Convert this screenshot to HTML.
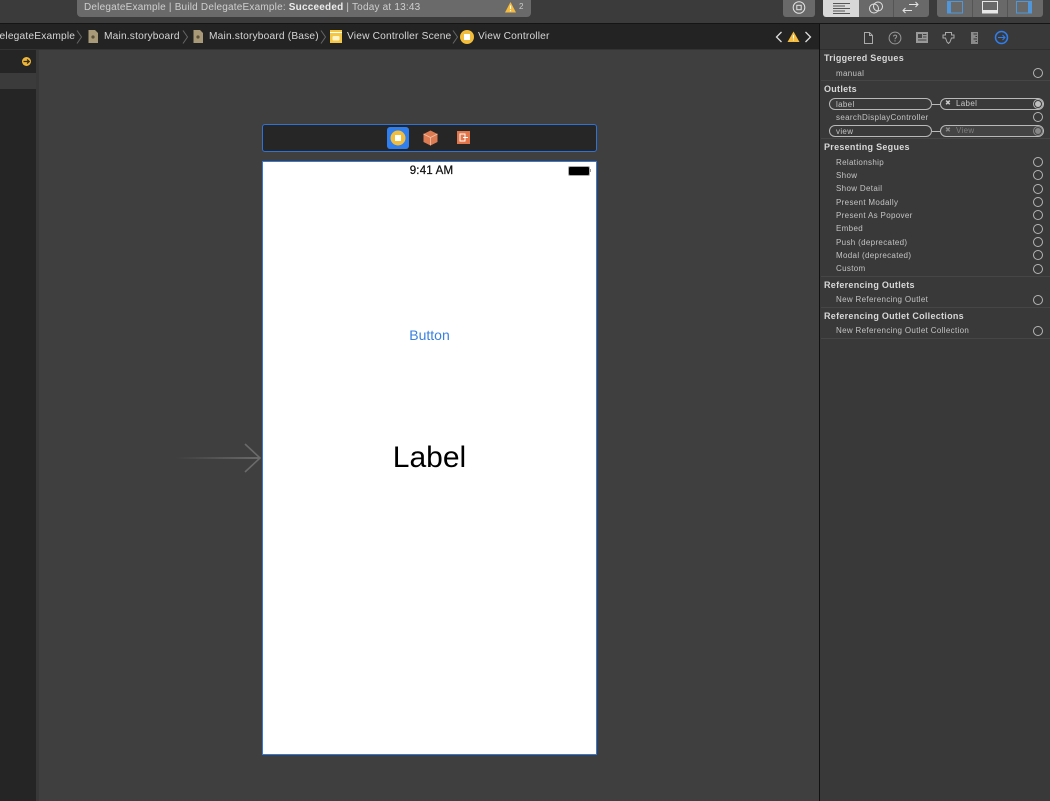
<!DOCTYPE html>
<html><head><meta charset="utf-8"><style>
html,body{margin:0;padding:0}
body{width:1050px;height:801px;overflow:hidden;background:#3f3f3f;position:relative;font-family:"Liberation Sans",sans-serif;color:#ddd}
#w{position:absolute;left:0;top:0;width:1050px;height:801px;overflow:hidden;filter:blur(.3px)}
.a{position:absolute}
.t{position:absolute;white-space:nowrap;line-height:12px}
.h{position:absolute;white-space:nowrap;line-height:12px;font-size:9px;font-weight:bold;color:#d8d8d8;left:824px;letter-spacing:.28px}
.r{position:absolute;white-space:nowrap;line-height:12px;font-size:8px;color:#c4c4c4;left:836px;letter-spacing:.33px;margin-top:.5px}
.c{position:absolute;left:1033px;width:8px;height:8px;border:1px solid #b5b5b5;border-radius:50%}
.l{position:absolute;left:821px;width:229px;height:1px;background:#464646}
.p{position:absolute;height:10px;border:1px solid #b9b9b9;border-radius:6px;background:#3a3a3a}
.bc{font-size:10.2px;letter-spacing:.18px;color:#d6d6d6;position:absolute;top:31px;line-height:12px;white-space:nowrap}
</style></head><body><div id="w">
<div class="a" style="left:0;top:0;width:1050px;height:23px;background:#3b3b3b"></div>
<div class="a" style="left:0;top:23px;width:1050px;height:1px;background:#151515"></div>
<div class="a" style="left:77px;top:0;width:454px;height:17px;background:#6a6a6a;border-radius:0 0 4px 4px"></div>
<div class="t" style="left:84px;top:2px;font-size:10px;color:#cfcfcf;letter-spacing:.2px">DelegateExample | Build DelegateExample: <b style="color:#ececec">Succeeded</b> | Today at 13:43</div>
<svg class="a" style="left:504px;top:1px" width="13" height="12"><path d="M6.5 1L12 11.5H1z" fill="#f4bb3f"/><path d="M6.5 4.5V8M6.5 9v1.2" stroke="#fff" stroke-width="1.1"/></svg>
<div class="t" style="left:519px;top:1px;font-size:8px;color:#ccc">2</div>

<div class="a" style="left:783px;top:0;width:32px;height:17px;background:#696969;border-radius:0 0 3px 3px"></div>
<svg class="a" style="left:792px;top:0" width="14" height="15" fill="none" stroke="#e4e4e4"><circle cx="7" cy="7.5" r="5.8"/><rect x="4.8" y="5.3" width="4.4" height="4.4"/></svg>
<div class="a" style="left:823px;top:0;width:36px;height:17px;background:#d8d8d8;border-radius:0 0 0 3px"></div>
<div class="a" style="left:859px;top:0;width:70px;height:17px;background:#696969;border-radius:0 0 3px 0"></div>
<div class="a" style="left:893px;top:0;width:1px;height:17px;background:#555"></div>
<svg class="a" style="left:833px;top:2px" width="18" height="13" stroke="#555" stroke-width="1"><path d="M0 1.5H17M0 4H12M0 6.5H17M0 9H12M0 11.5H17"/></svg>
<svg class="a" style="left:868px;top:0" width="16" height="15" fill="none" stroke="#e4e4e4"><circle cx="6" cy="8.5" r="4.5"/><circle cx="10" cy="6.5" r="4.5"/></svg>
<svg class="a" style="left:902px;top:1px" width="17" height="13" fill="none" stroke="#e4e4e4"><path d="M7 3.5H16M13.5 1L16 3.5L13.5 6M10 9.5H1M3.5 7L1 9.5L3.5 12"/></svg>
<div class="a" style="left:937px;top:0;width:106px;height:17px;background:#696969;border-radius:0 0 3px 3px"></div>
<div class="a" style="left:972px;top:0;width:1px;height:17px;background:#555"></div>
<div class="a" style="left:1007px;top:0;width:1px;height:17px;background:#555"></div>
<svg class="a" style="left:947px;top:1px" width="17" height="13" fill="none"><rect x=".5" y=".5" width="15" height="11.5" stroke="#4f96da"/><rect x="1" y="1" width="3" height="11" fill="#4f96da"/></svg>
<svg class="a" style="left:982px;top:1px" width="17" height="13" fill="none"><rect x=".5" y=".5" width="15" height="11.5" stroke="#e8e8e8"/><rect x="1" y="9" width="15" height="3" fill="#e8e8e8"/></svg>
<svg class="a" style="left:1016px;top:1px" width="17" height="13" fill="none"><rect x=".5" y=".5" width="15" height="11.5" stroke="#4f96da"/><rect x="12" y="1" width="3" height="11" fill="#4f96da"/></svg>

<div class="a" style="left:0;top:24px;width:820px;height:25px;background:#232323"></div>
<div class="a" style="left:0;top:49px;width:820px;height:1px;background:#333"></div>
<div class="bc" style="left:-8px">DelegateExample</div>
<svg class="a" style="left:76px;top:29px" width="7" height="16" fill="none" stroke="#666"><path d="M1 1.5L5.5 8L1 14.5"/></svg>
<svg class="a" style="left:88px;top:30px" width="11" height="13"><path d="M.5 0H7L10 3V13H.5z" fill="#a89a78"/><circle cx="5" cy="7" r="1.6" fill="#5d5237"/></svg>
<div class="bc" style="left:104px">Main.storyboard</div>
<svg class="a" style="left:182px;top:29px" width="7" height="16" fill="none" stroke="#666"><path d="M1 1.5L5.5 8L1 14.5"/></svg>
<svg class="a" style="left:193px;top:30px" width="11" height="13"><path d="M.5 0H7L10 3V13H.5z" fill="#a89a78"/><circle cx="5" cy="7" r="1.6" fill="#5d5237"/></svg>
<div class="bc" style="left:209px">Main.storyboard (Base)</div>
<svg class="a" style="left:320px;top:29px" width="7" height="16" fill="none" stroke="#666"><path d="M1 1.5L5.5 8L1 14.5"/></svg>
<svg class="a" style="left:330px;top:30px" width="12" height="13"><rect width="12" height="13" fill="#f3c643"/><rect y="2" width="12" height="1" fill="#fff"/><rect x="2.5" y="6" width="7" height="4.5" rx="1" fill="#fff3c8"/></svg>
<div class="bc" style="left:347px">View Controller Scene</div>
<svg class="a" style="left:452px;top:29px" width="7" height="16" fill="none" stroke="#666"><path d="M1 1.5L5.5 8L1 14.5"/></svg>
<svg class="a" style="left:460px;top:30px" width="14" height="14"><circle cx="7" cy="7" r="7" fill="#f2bd3b"/><rect x="4" y="4" width="6" height="6" fill="#fff"/></svg>
<div class="bc" style="left:478px">View Controller</div>
<svg class="a" style="left:775px;top:31px" width="8" height="12" fill="none" stroke="#ddd" stroke-width="1.3"><path d="M6.5 1L1.5 6L6.5 11"/></svg>
<svg class="a" style="left:787px;top:31px" width="13" height="11"><path d="M6.5 .5L12.5 11H.5z" fill="#f4bb3f"/><path d="M6.5 4V7.5M6.5 8.5v1" stroke="#fff"/></svg>
<svg class="a" style="left:804px;top:31px" width="8" height="12" fill="none" stroke="#ddd" stroke-width="1.3"><path d="M1.5 1L6.5 6L1.5 11"/></svg>

<div class="a" style="left:0;top:50px;width:36px;height:751px;background:#252525"></div>
<div class="a" style="left:36px;top:50px;width:3px;height:751px;background:#383838"></div>
<div class="a" style="left:0;top:73px;width:36px;height:16px;background:#3b3b3b"></div>
<svg class="a" style="left:21px;top:56px" width="11" height="11"><circle cx="5.5" cy="5.5" r="4.5" fill="#eeb73a"/><path d="M2.5 5.5H8M6 3.5L8.3 5.5L6 7.5" fill="none" stroke="#3a2f10" stroke-width="1.2"/></svg>

<div class="a" style="left:262px;top:124px;width:333px;height:26px;background:#262626;border:1px solid #3071d6;border-radius:3px"></div>
<div class="a" style="left:387px;top:127px;width:22px;height:22px;background:#2f7ff0;border-radius:3px"></div>
<svg class="a" style="left:390px;top:130px" width="16" height="16"><circle cx="8" cy="8" r="7.5" fill="#f2bd3b"/><rect x="5" y="5" width="6" height="6" fill="#fff"/></svg>
<svg class="a" style="left:423px;top:130px" width="15" height="16"><path d="M7.5 .5L14.5 4V12L7.5 15.5L.5 12V4z" fill="#dd7b52"/><path d="M.5 4L7.5 7.5L14.5 4M7.5 7.5V15.5" fill="none" stroke="#f3c2a8" stroke-width=".8"/></svg>
<svg class="a" style="left:457px;top:131px" width="13" height="13"><rect width="13" height="13" fill="#e2764a"/><path d="M3 3H8V10H3z" fill="none" stroke="#fff"/><path d="M6 6.5H11" stroke="#fff"/></svg>

<div class="a" style="left:262px;top:161px;width:333px;height:592px;background:#fff;border:1px solid #3478dc"></div>
<div class="t" style="left:264px;top:165px;width:335px;text-align:center;font-size:11.5px;color:#111;line-height:13px;letter-spacing:.2px;-webkit-text-stroke:.25px #111">9:41 AM</div>
<div class="a" style="left:568px;top:166px;width:20px;height:8px;background:#000;border:1px solid #aaa;border-radius:2px"></div>
<div class="a" style="left:590px;top:169px;width:1px;height:3px;background:#999"></div>
<div class="t" style="left:263px;top:328px;width:333px;text-align:center;font-size:14px;line-height:15px;color:#3a80e0">Button</div>
<div class="t" style="left:263px;top:440px;width:333px;text-align:center;font-size:30px;line-height:36px;color:#000">Label</div>
<div class="a" style="left:175px;top:457px;width:85px;height:2px;background:linear-gradient(90deg,rgba(105,105,105,0),#6a6a6a)"></div>
<svg class="a" style="left:240px;top:441px" width="22" height="34" fill="none" stroke="#6a6a6a" stroke-width="1.6"><path d="M5 3L20 17L5 31"/></svg>

<div class="a" style="left:819px;top:24px;width:1px;height:777px;background:#111"></div>
<div class="a" style="left:820px;top:24px;width:230px;height:777px;background:#393939"></div>
<div class="a" style="left:820px;top:49px;width:230px;height:1px;background:#2e2e2e"></div>
<svg class="a" style="left:863px;top:31px" width="11" height="13" fill="none" stroke="#aaa"><path d="M1.5 1.5H6.5L9.5 4.5V12.5H1.5zM6.5 1.5V4.5H9.5"/></svg>
<svg class="a" style="left:888px;top:31px" width="14" height="14" fill="none" stroke="#999"><circle cx="7" cy="7" r="5.9"/><path d="M5.5 5.5C5.7 3.5 8.7 3.7 8.7 5.5C8.7 6.7 7 6.7 7 8.3M7 9.3V10.5"/></svg>
<svg class="a" style="left:916px;top:32px" width="12" height="11"><rect width="12" height="11" fill="#999"/><rect x="2" y="2" width="4" height="4" fill="#444"/><path d="M7 2.5H10.5M7 5H10.5M2 8H10.5" stroke="#444"/></svg>
<svg class="a" style="left:942px;top:31px" width="13" height="13" fill="none" stroke="#aaa"><path d="M3.5 1.5H9.5V4H12V7H9.5L8 11L6.5 12.5L5 11L3.5 7H1V4H3.5z"/></svg>
<svg class="a" style="left:971px;top:32px" width="7" height="12"><rect width="7" height="12" fill="#8a8a8a"/><path d="M2.5 2H6M4.5 4.5H6M2.5 7H6M4.5 9.5H6" stroke="#333"/></svg>
<svg class="a" style="left:994px;top:30px" width="15" height="15" fill="none" stroke="#2f7ff0" stroke-width="1.5"><circle cx="7.5" cy="7.5" r="6"/><path d="M4 7.5H11M8.5 5L11 7.5L8.5 10" stroke-width="1"/></svg>

<div class="h" style="top:52px">Triggered Segues</div>
<div class="r" style="top:67px">manual</div><div class="c" style="top:68px"></div>
<div class="l" style="top:80px"></div>
<div class="h" style="top:83px">Outlets</div>
<div class="p" style="left:829px;top:98px;width:101px"></div>
<div class="a" style="left:932px;top:104px;width:8px;height:1px;background:#b9b9b9"></div>
<div class="p" style="left:940px;top:98px;width:102px"></div>
<div class="r" style="top:98px">label</div>
<div class="t" style="left:945px;top:98px;font-size:7px;color:#ccc">✖</div>
<div class="t" style="left:956px;top:98px;font-size:8px;color:#c8c8c8;letter-spacing:.33px">Label</div>
<div class="c" style="top:99px"></div>
<div class="a" style="left:1035px;top:101px;width:6px;height:6px;background:#c0c0c0;border-radius:50%"></div>
<div class="r" style="top:111px">searchDisplayController</div><div class="c" style="top:112px"></div>
<div class="p" style="left:829px;top:125px;width:101px"></div>
<div class="a" style="left:932px;top:131px;width:8px;height:1px;background:#b9b9b9"></div>
<div class="p" style="left:940px;top:125px;width:102px;background:#444"></div>
<div class="r" style="top:125px">view</div>
<div class="t" style="left:945px;top:125px;font-size:7px;color:#888">✖</div>
<div class="t" style="left:956px;top:125px;font-size:8px;color:#7e7e7e;letter-spacing:.33px">View</div>
<div class="c" style="top:126px;border-color:#888"></div>
<div class="a" style="left:1035px;top:128px;width:6px;height:6px;background:#888;border-radius:50%"></div>
<div class="l" style="top:138px"></div>
<div class="h" style="top:141px">Presenting Segues</div>
<div class="r" style="top:156px">Relationship</div><div class="c" style="top:157px"></div>
<div class="r" style="top:169px">Show</div><div class="c" style="top:170px"></div>
<div class="r" style="top:182px">Show Detail</div><div class="c" style="top:184px"></div>
<div class="r" style="top:196px">Present Modally</div><div class="c" style="top:197px"></div>
<div class="r" style="top:209px">Present As Popover</div><div class="c" style="top:210px"></div>
<div class="r" style="top:222px">Embed</div><div class="c" style="top:224px"></div>
<div class="r" style="top:236px">Push (deprecated)</div><div class="c" style="top:237px"></div>
<div class="r" style="top:249px">Modal (deprecated)</div><div class="c" style="top:250px"></div>
<div class="r" style="top:262px">Custom</div><div class="c" style="top:264px"></div>
<div class="l" style="top:276px"></div>
<div class="h" style="top:279px">Referencing Outlets</div>
<div class="r" style="top:293px">New Referencing Outlet</div><div class="c" style="top:295px"></div>
<div class="l" style="top:307px"></div>
<div class="h" style="top:310px">Referencing Outlet Collections</div>
<div class="r" style="top:324px">New Referencing Outlet Collection</div><div class="c" style="top:326px"></div>
<div class="l" style="top:338px"></div>
</div></body></html>
